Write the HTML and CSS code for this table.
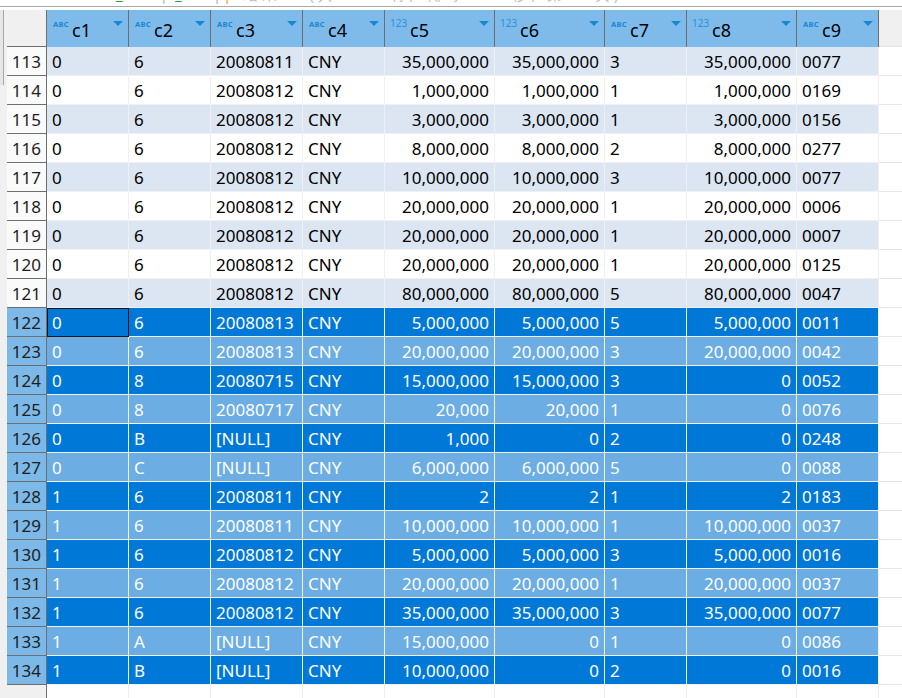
FILE: index.html
```html
<!DOCTYPE html>
<html>
<head>
<meta charset="utf-8">
<link rel="stylesheet" href="styles.css">
</head>
<body>
<div class="title"><div class="title-line"><span class="g">_</span>sp<span class="g">_</span>q<span class="o">|</span> 结果 1 (共 134 行, 耗时 0.1 秒, 第 1 页)</div></div>
<div class="rule"></div>
<div class="gap"></div>
<div class="sheet">
  <div class="gutter"><div class="knob"></div></div>
  <div class="grid">
    <div class="row head">
      <div class="corner"></div>
      <div class="h"><span class="t">ABC</span>c1<span class="arr"></span></div>
      <div class="h"><span class="t">ABC</span>c2<span class="arr"></span></div>
      <div class="h"><span class="t">ABC</span>c3<span class="arr"></span></div>
      <div class="h"><span class="t">ABC</span>c4<span class="arr"></span></div>
      <div class="h"><span class="t t123">123</span>c5<span class="arr"></span></div>
      <div class="h"><span class="t t123">123</span>c6<span class="arr"></span></div>
      <div class="h"><span class="t">ABC</span>c7<span class="arr"></span></div>
      <div class="h"><span class="t t123">123</span>c8<span class="arr"></span></div>
      <div class="h"><span class="t">ABC</span>c9<span class="arr"></span></div>
      <div class="hx"></div>
    </div>
    <div class="row odd"><div class="rh">113</div><div class="c">0</div><div class="c">6</div><div class="c">20080811</div><div class="c">CNY</div><div class="c n">35,000,000</div><div class="c n">35,000,000</div><div class="c">3</div><div class="c n">35,000,000</div><div class="c">0077</div><div class="x"></div></div>
    <div class="row"><div class="rh">114</div><div class="c">0</div><div class="c">6</div><div class="c">20080812</div><div class="c">CNY</div><div class="c n">1,000,000</div><div class="c n">1,000,000</div><div class="c">1</div><div class="c n">1,000,000</div><div class="c">0169</div><div class="x"></div></div>
    <div class="row odd"><div class="rh">115</div><div class="c">0</div><div class="c">6</div><div class="c">20080812</div><div class="c">CNY</div><div class="c n">3,000,000</div><div class="c n">3,000,000</div><div class="c">1</div><div class="c n">3,000,000</div><div class="c">0156</div><div class="x"></div></div>
    <div class="row"><div class="rh">116</div><div class="c">0</div><div class="c">6</div><div class="c">20080812</div><div class="c">CNY</div><div class="c n">8,000,000</div><div class="c n">8,000,000</div><div class="c">2</div><div class="c n">8,000,000</div><div class="c">0277</div><div class="x"></div></div>
    <div class="row odd"><div class="rh">117</div><div class="c">0</div><div class="c">6</div><div class="c">20080812</div><div class="c">CNY</div><div class="c n">10,000,000</div><div class="c n">10,000,000</div><div class="c">3</div><div class="c n">10,000,000</div><div class="c">0077</div><div class="x"></div></div>
    <div class="row"><div class="rh">118</div><div class="c">0</div><div class="c">6</div><div class="c">20080812</div><div class="c">CNY</div><div class="c n">20,000,000</div><div class="c n">20,000,000</div><div class="c">1</div><div class="c n">20,000,000</div><div class="c">0006</div><div class="x"></div></div>
    <div class="row odd"><div class="rh">119</div><div class="c">0</div><div class="c">6</div><div class="c">20080812</div><div class="c">CNY</div><div class="c n">20,000,000</div><div class="c n">20,000,000</div><div class="c">1</div><div class="c n">20,000,000</div><div class="c">0007</div><div class="x"></div></div>
    <div class="row"><div class="rh">120</div><div class="c">0</div><div class="c">6</div><div class="c">20080812</div><div class="c">CNY</div><div class="c n">20,000,000</div><div class="c n">20,000,000</div><div class="c">1</div><div class="c n">20,000,000</div><div class="c">0125</div><div class="x"></div></div>
    <div class="row odd"><div class="rh">121</div><div class="c">0</div><div class="c">6</div><div class="c">20080812</div><div class="c">CNY</div><div class="c n">80,000,000</div><div class="c n">80,000,000</div><div class="c">5</div><div class="c n">80,000,000</div><div class="c">0047</div><div class="x"></div></div>
    <div class="row sd"><div class="rh">122</div><div class="c focus">0</div><div class="c">6</div><div class="c">20080813</div><div class="c">CNY</div><div class="c n">5,000,000</div><div class="c n">5,000,000</div><div class="c">5</div><div class="c n">5,000,000</div><div class="c">0011</div><div class="x"></div></div>
    <div class="row sl"><div class="rh">123</div><div class="c">0</div><div class="c">6</div><div class="c">20080813</div><div class="c">CNY</div><div class="c n">20,000,000</div><div class="c n">20,000,000</div><div class="c">3</div><div class="c n">20,000,000</div><div class="c">0042</div><div class="x"></div></div>
    <div class="row sd"><div class="rh">124</div><div class="c">0</div><div class="c">8</div><div class="c">20080715</div><div class="c">CNY</div><div class="c n">15,000,000</div><div class="c n">15,000,000</div><div class="c">3</div><div class="c n">0</div><div class="c">0052</div><div class="x"></div></div>
    <div class="row sl"><div class="rh">125</div><div class="c">0</div><div class="c">8</div><div class="c">20080717</div><div class="c">CNY</div><div class="c n">20,000</div><div class="c n">20,000</div><div class="c">1</div><div class="c n">0</div><div class="c">0076</div><div class="x"></div></div>
    <div class="row sd"><div class="rh">126</div><div class="c">0</div><div class="c">B</div><div class="c">[NULL]</div><div class="c">CNY</div><div class="c n">1,000</div><div class="c n">0</div><div class="c">2</div><div class="c n">0</div><div class="c">0248</div><div class="x"></div></div>
    <div class="row sl"><div class="rh">127</div><div class="c">0</div><div class="c">C</div><div class="c">[NULL]</div><div class="c">CNY</div><div class="c n">6,000,000</div><div class="c n">6,000,000</div><div class="c">5</div><div class="c n">0</div><div class="c">0088</div><div class="x"></div></div>
    <div class="row sd"><div class="rh">128</div><div class="c">1</div><div class="c">6</div><div class="c">20080811</div><div class="c">CNY</div><div class="c n">2</div><div class="c n">2</div><div class="c">1</div><div class="c n">2</div><div class="c">0183</div><div class="x"></div></div>
    <div class="row sl"><div class="rh">129</div><div class="c">1</div><div class="c">6</div><div class="c">20080811</div><div class="c">CNY</div><div class="c n">10,000,000</div><div class="c n">10,000,000</div><div class="c">1</div><div class="c n">10,000,000</div><div class="c">0037</div><div class="x"></div></div>
    <div class="row sd"><div class="rh">130</div><div class="c">1</div><div class="c">6</div><div class="c">20080812</div><div class="c">CNY</div><div class="c n">5,000,000</div><div class="c n">5,000,000</div><div class="c">3</div><div class="c n">5,000,000</div><div class="c">0016</div><div class="x"></div></div>
    <div class="row sl"><div class="rh">131</div><div class="c">1</div><div class="c">6</div><div class="c">20080812</div><div class="c">CNY</div><div class="c n">20,000,000</div><div class="c n">20,000,000</div><div class="c">1</div><div class="c n">20,000,000</div><div class="c">0037</div><div class="x"></div></div>
    <div class="row sd"><div class="rh">132</div><div class="c">1</div><div class="c">6</div><div class="c">20080812</div><div class="c">CNY</div><div class="c n">35,000,000</div><div class="c n">35,000,000</div><div class="c">3</div><div class="c n">35,000,000</div><div class="c">0077</div><div class="x"></div></div>
    <div class="row sl"><div class="rh">133</div><div class="c">1</div><div class="c">A</div><div class="c">[NULL]</div><div class="c">CNY</div><div class="c n">15,000,000</div><div class="c n">0</div><div class="c">1</div><div class="c n">0</div><div class="c">0086</div><div class="x"></div></div>
    <div class="row sd"><div class="rh">134</div><div class="c">1</div><div class="c">B</div><div class="c">[NULL]</div><div class="c">CNY</div><div class="c n">10,000,000</div><div class="c n">0</div><div class="c">2</div><div class="c n">0</div><div class="c">0016</div><div class="x"></div></div>
    <div class="row tail"><div class="rh"></div><div class="c"></div><div class="c"></div><div class="c"></div><div class="c"></div><div class="c"></div><div class="c"></div><div class="c"></div><div class="c"></div><div class="c"></div><div class="x"></div></div>
  </div>
</div>
</body>
</html>
```

FILE: styles.css
```css
html, body {
  margin: 0;
  padding: 0;
}
body {
  width: 902px;
  height: 698px;
  overflow: hidden;
  background: #ffffff;
  font-family: "Noto Sans", "Open Sans", sans-serif;
  display: flex;
  flex-direction: column;
}
.title {
  height: 6px;
  overflow: hidden;
  flex: none;
}
.title-line {
  margin-top: -14px;
  padding-left: 116px;
  font-size: 15px;
  line-height: 16px;
  letter-spacing: 4px;
  color: #bdbdbd;
  white-space: nowrap;
}
.title-line .g { color: #2e9a3a; letter-spacing: 28px; }
.title-line .o { color: #e0a020; }
.rule {
  height: 1px;
  background: #a9a9a9;
  flex: none;
}
.gap {
  height: 3px;
  flex: none;
}
.sheet {
  flex: 1;
  display: flex;
  min-height: 0;
}
.gutter {
  width: 7px;
  flex: none;
  background: #f0f0f0;
}
.knob {
  width: 4px;
  height: 75px;
  box-sizing: border-box;
  background: #e6e6e6;
  border-right: 1px solid #a8a8a8;
}
.grid {
  flex: 1;
  display: flex;
  flex-direction: column;
  min-width: 0;
}
.row {
  display: grid;
  grid-template-columns: 40px 82px 82px 92px 82px 110px 110px 82px 110px 82px 1fr;
  height: 29px;
  flex: none;
}
.row.head {
  height: 37px;
}
.corner {
  box-sizing: border-box;
  background: #f0f0f0;
  border-right: 1px solid #6e6e6e;
  border-bottom: 1px solid #6e6e6e;
}
.h {
  position: relative;
  box-sizing: border-box;
  background: #7fbbea;
  border-right: 1px solid #6e6e6e;
  padding: 8px 0 0 25px;
  font-size: 18px;
  line-height: 24px;
  color: #000;
  white-space: nowrap;
}
.hx {
  background: #f0f0f0;
  border-bottom: 1px solid #e2e2e2;
}
.t {
  position: absolute;
  left: 6px;
  top: 10px;
  font-size: 7.5px;
  line-height: 8px;
  font-weight: bold;
  letter-spacing: 0.3px;
  color: #1a86d0;
}
.t.t123 {
  left: 5px;
  top: 8px;
  font-size: 10px;
  line-height: 10px;
  font-weight: normal;
  letter-spacing: 0;
  color: #2b92dc;
}
.arr {
  position: absolute;
  right: 5px;
  top: 11px;
  width: 0;
  height: 0;
  border-left: 5px solid transparent;
  border-right: 5px solid transparent;
  border-top: 5px solid #1a86d0;
}
.rh {
  box-sizing: border-box;
  background: #fafafa;
  border-right: 1px solid #6e6e6e;
  border-bottom: 1px solid #6e6e6e;
  padding: 2px 5px 0 0;
  font-size: 17px;
  line-height: 26px;
  text-align: right;
  color: #1e1e1e;
}
.c {
  box-sizing: border-box;
  background: #ffffff;
  border-right: 1px solid #f0f0f0;
  border-bottom: 1px solid #f0f0f0;
  padding: 2px 5px 0;
  font-size: 17px;
  line-height: 26px;
  color: #000;
  white-space: nowrap;
  overflow: hidden;
}
.c.n {
  text-align: right;
}
.x {
  background: #ffffff;
  border-bottom: 1px solid #e6e6e6;
}
.odd .c {
  background: #dce6f2;
}
.sd .c {
  background: #0078d7;
  color: #ffffff;
}
.sl .c {
  background: #6cade3;
  color: #ffffff;
}
.sd .rh,
.sl .rh {
  background: #7cb9e8;
}
.c.focus {
  outline: 1px solid #141414;
  outline-offset: -1px;
}
.row.tail {
  flex: 1;
  height: auto;
}
.tail .rh {
  background: #f0f0f0;
  border-bottom: none;
}
.tail .c {
  background: #ffffff;
  border-right: 1px solid #ececec;
  border-bottom: none;
}
.tail .x {
  border-bottom: none;
}
```
